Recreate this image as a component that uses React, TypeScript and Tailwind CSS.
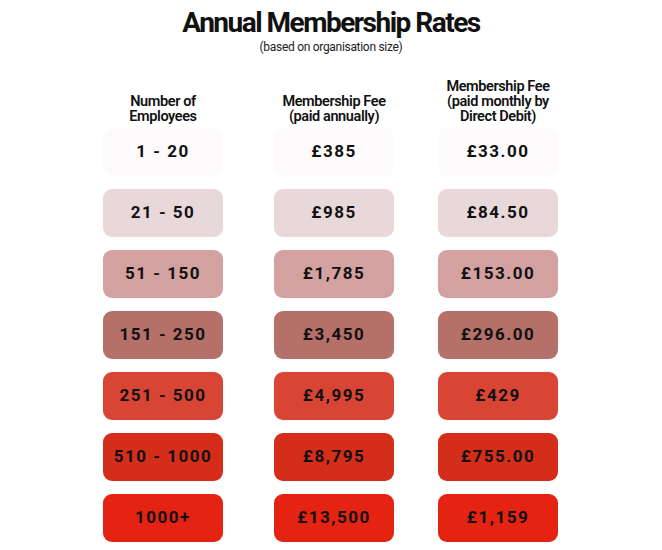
const rows = [
  { size: "1 - 20", annual: "£385", monthly: "£33.00", bg: "bg-[#fdfafb]" },
  { size: "21 - 50", annual: "£985", monthly: "£84.50", bg: "bg-[#e9d8d9]" },
  { size: "51 - 150", annual: "£1,785", monthly: "£153.00", bg: "bg-[#d3a19f]" },
  { size: "151 - 250", annual: "£3,450", monthly: "£296.00", bg: "bg-[#b47069]" },
  { size: "251 - 500", annual: "£4,995", monthly: "£429", bg: "bg-[#d94535]" },
  { size: "510 - 1000", annual: "£8,795", monthly: "£755.00", bg: "bg-[#d42e1b]" },
  { size: "1000+", annual: "£13,500", monthly: "£1,159", bg: "bg-[#e42312]" },
];

function Cell({ text, bg }: { text: string; bg: string }) {
  return (
    <div
      className={`flex h-[48px] w-[120px] items-center justify-center rounded-[9px] text-[17px] font-bold tracking-[1.5px] text-[#111] ${bg}`}
    >
      {text}
    </div>
  );
}

function Head({ children }: { children: React.ReactNode }) {
  return (
    <div className="w-[120px] text-center text-[14.5px] font-semibold leading-[15px] tracking-[-0.4px] text-[#111]">
      {children}
    </div>
  );
}

export default function App() {
  return (
    <div
      className="w-[662px] h-[550px] bg-white text-[#111]"
      style={{ fontFamily: "Roboto, 'Noto Sans', sans-serif" }}
    >
      <h1 className="pt-[7px] text-center text-[28px] font-bold leading-[32px] tracking-[-1.5px]">
        Annual Membership Rates
      </h1>
      <p className="pt-[1px] text-center text-[12px] leading-[14px] tracking-[-0.3px] text-[#222]">
        (based on organisation size)
      </p>

      <div className="mt-[25px] grid grid-cols-[171px_164px_120px] items-end pl-[103px]">
        <Head>
          Number of
          <br />
          Employees
        </Head>
        <Head>
          Membership Fee
          <br />
          (paid annually)
        </Head>
        <Head>
          Membership Fee
          <br />
          (paid monthly by
          <br />
          Direct Debit)
        </Head>
      </div>

      <div className="mt-[4px] flex flex-col gap-[13px] pl-[103px]">
        {rows.map((r) => (
          <div key={r.size} className="grid grid-cols-[171px_164px_120px]">
            <Cell text={r.size} bg={r.bg} />
            <Cell text={r.annual} bg={r.bg} />
            <Cell text={r.monthly} bg={r.bg} />
          </div>
        ))}
      </div>
    </div>
  );
}
